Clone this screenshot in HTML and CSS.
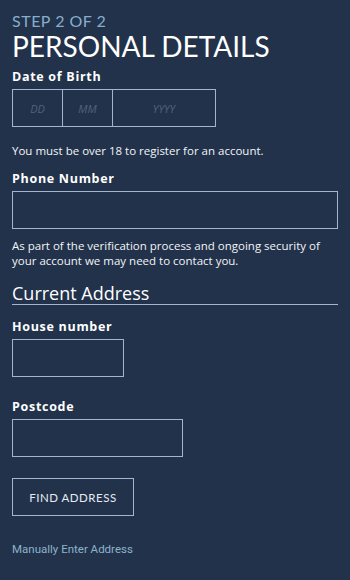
FILE: index.html
```html
<!DOCTYPE html>
<html lang="en">
  <head>
    <meta charset="UTF-8" />
    <meta name="viewport" content="width=device-width, initial-scale=1.0" />
    <title>Personal Details</title>
    <link rel="stylesheet" href="styles.css">
  </head>
  <body>
    <div class="step">STEP 2 OF 2</div>
    <h1>PERSONAL DETAILS</h1>
    <form>
      <div class="form-group">
        <label>Date of Birth</label>
        <div class="dob">
          <input type="text" class="dd" placeholder="DD" />
          <input type="text" class="mm" placeholder="MM" />
          <input type="text" class="yyyy" placeholder="YYYY" />
        </div>
      </div>
      <p class="hint age">You must be over 18 to register for an account.</p>
      <div class="form-group">
        <label for="phone">Phone Number</label>
        <input type="text" id="phone" class="field full" />
      </div>
      <p class="hint contact">As part of the verification process and ongoing security of your account we may need to contact you.</p>
      <h2>Current Address</h2>
      <div class="form-group">
        <label for="house">House number</label>
        <input type="text" id="house" class="field house" />
      </div>
      <div class="form-group postcode-group">
        <label for="postcode">Postcode</label>
        <input type="text" id="postcode" class="field postcode" />
      </div>
      <button type="button" class="button">FIND ADDRESS</button>
      <a href="#" class="manual">Manually Enter Address</a>
    </form>
  </body>
</html>
```

FILE: styles.css
```css
body {
  font-family: "Open Sans", sans-serif;
  background: #22324b;
  color: #ffffff;
  margin: 0;
  padding: 11px 12px 0 12px;
}
.step {
  font-family: Lato, sans-serif;
  color: #86aecb;
  font-size: 16px;
  letter-spacing: 0.5px;
  line-height: 20px;
}
h1 {
  font-family: Lato, sans-serif;
  font-weight: 400;
  font-size: 28px;
  letter-spacing: 0;
  line-height: 30px;
  margin: 0 0 6px 0;
}
label {
  display: block;
  font-size: 12.5px;
  font-weight: 700;
  letter-spacing: 0.7px;
  line-height: 20px;
  margin-bottom: 2px;
}
input {
  box-sizing: border-box;
  display: block;
  height: 38px;
  background: transparent;
  border: 1px solid #a4b6cf;
  color: #fff;
  font-family: "Open Sans", sans-serif;
  margin: 0;
}
input::placeholder {
  color: #52627a;
  font-style: italic;
  font-size: 11px;
}
.dob {
  display: flex;
}
.dob input {
  text-align: center;
  padding: 0;
}
.dd {
  width: 51px;
}
.mm {
  width: 50px;
  border-left: none !important;
}
.yyyy {
  width: 103px;
  border-left: none !important;
}
.hint {
  font-size: 11.5px;
  line-height: 15px;
  color: #f2f4f7;
}
.age {
  margin: 16px 0 11px 0;
}
.contact {
  margin: 9px 0 14px 0;
}
.full {
  width: 100%;
}
.house {
  width: 112px;
}
.postcode {
  width: 171px;
}
h2 {
  font-weight: 400;
  font-size: 18px;
  line-height: 22px;
  margin: 0 0 12px 0;
  padding: 0;
  border-bottom: 1px solid #a4b6cf;
}
.postcode-group {
  margin-top: 20px;
}
.button {
  display: block;
  margin-top: 21px;
  width: 122px;
  height: 38px;
  background: transparent;
  border: 1px solid #a4b6cf;
  color: #e6ecf3;
  font-family: Lato, sans-serif;
  font-size: 11.5px;
  letter-spacing: 0.5px;
}
.manual {
  display: block;
  margin-top: 26px;
  font-family: Roboto, sans-serif;
  font-size: 11.5px;
  line-height: 14px;
  color: #8db3cc;
  text-decoration: none;
}
```
